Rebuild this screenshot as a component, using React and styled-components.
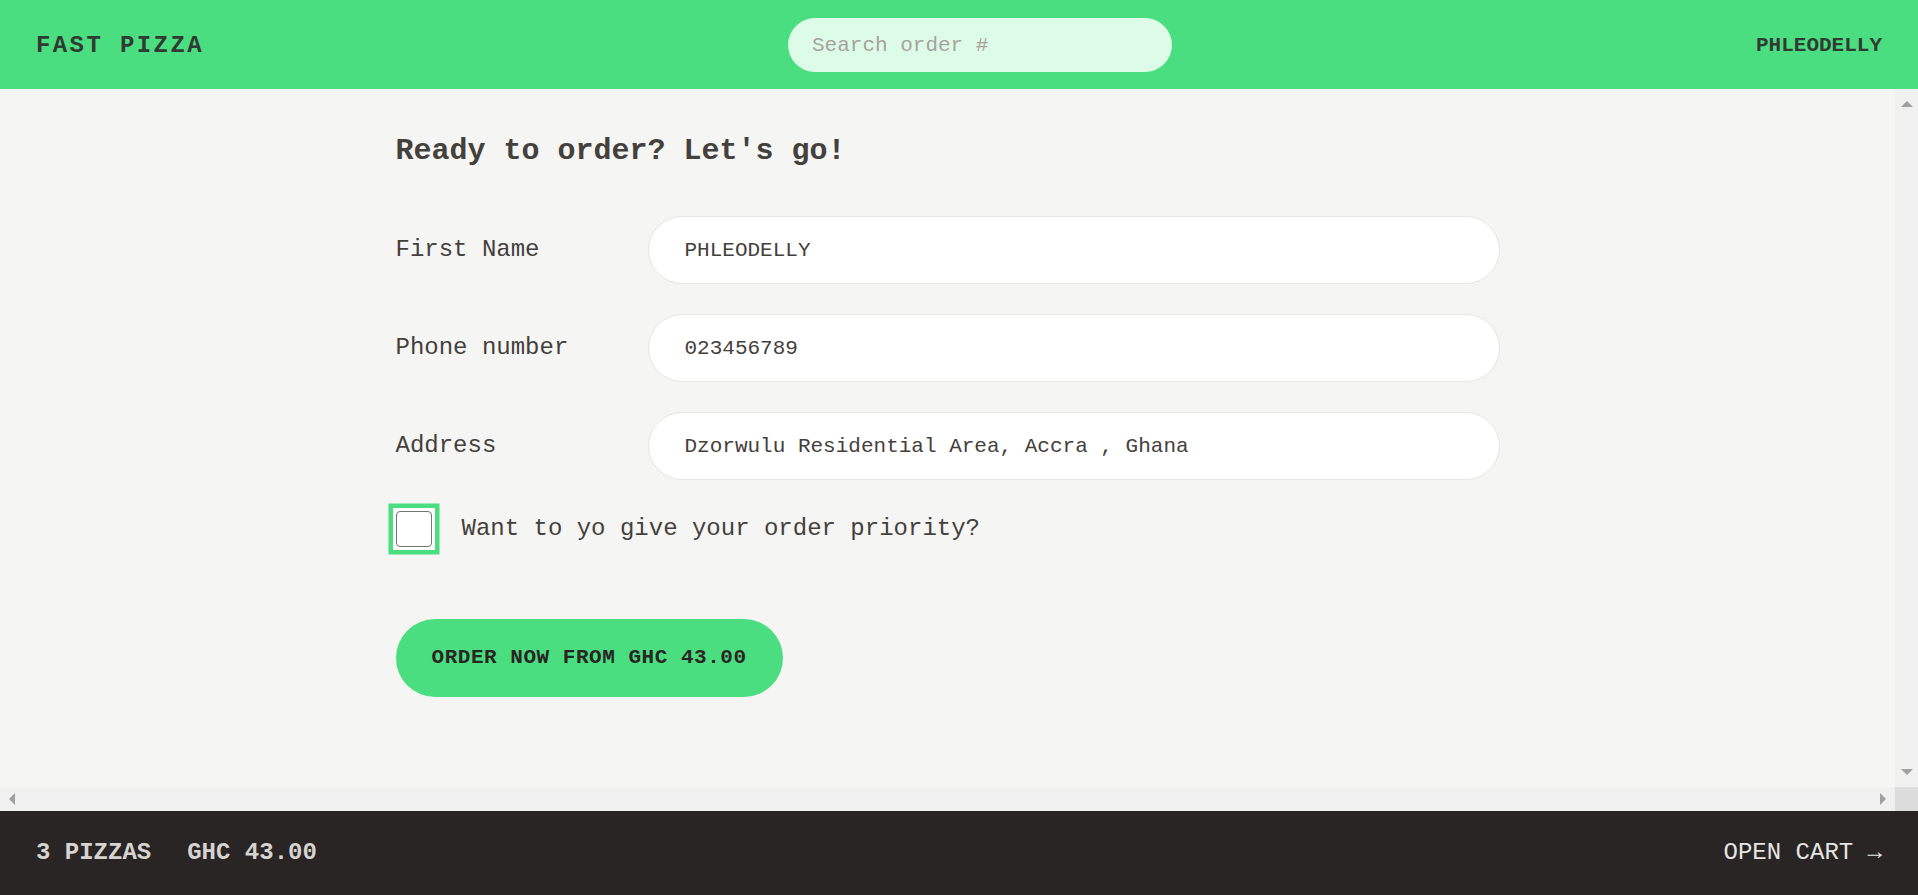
import React, { useState } from "react";
import styled, { createGlobalStyle, css } from "styled-components";

const GlobalStyle = createGlobalStyle`
  html, body {
    margin: 0;
    padding: 0;
  }
  body {
    font-family: "Liberation Mono", "DejaVu Sans Mono", monospace;
    color: #44403c;
    background-color: #f5f5f4;
  }
  * {
    box-sizing: border-box;
  }
`;

const AppLayout = styled.div`
  display: grid;
  grid-template-rows: auto 1fr auto;
  height: 100vh;
`;

const Header = styled.header`
  display: flex;
  align-items: center;
  justify-content: space-between;
  padding: 18px 36px 17px;
  background-color: #4ade80;
  text-transform: uppercase;
`;

const Logo = styled.a`
  font-size: 24px;
  font-weight: 600;
  letter-spacing: 2.4px;
  color: #2f3b33;
  text-decoration: none;
`;

const SearchInput = styled.input`
  width: 384px;
  height: 54px;
  padding: 12px 24px;
  border: none;
  border-radius: 9999px;
  background-color: #dcfce7;
  font-family: inherit;
  font-size: 21px;
  color: #44403c;
  outline: none;
  &::placeholder {
    color: #a8a29e;
  }
`;

const Username = styled.div`
  font-size: 21px;
  font-weight: 600;
  color: #2f3b33;
`;

const Main = styled.main`
  display: grid;
  grid-template-columns: 1fr 23px;
  grid-template-rows: 1fr 24px;
  min-height: 0;
  overflow: hidden;
  background-color: #f5f5f4;
`;

const Viewport = styled.div`
  min-height: 0;
  overflow: hidden;
`;

const ScrollTrack = styled.div`
  display: flex;
  flex-direction: ${(p) => (p.$vertical ? "column" : "row")};
  justify-content: space-between;
  background-color: #f0f0f0;
`;

const ScrollButton = styled.div`
  display: flex;
  align-items: center;
  justify-content: center;
  width: ${(p) => (p.$vertical ? "23px" : "24px")};
  height: ${(p) => (p.$vertical ? "30px" : "24px")};
`;

const Arrow = styled.span`
  width: 0;
  height: 0;
  ${(p) =>
    p.$dir === "up" &&
    css`
      border-left: 6px solid transparent;
      border-right: 6px solid transparent;
      border-bottom: 6px solid #a0a0a0;
    `}
  ${(p) =>
    p.$dir === "down" &&
    css`
      border-left: 6px solid transparent;
      border-right: 6px solid transparent;
      border-top: 6px solid #a0a0a0;
    `}
  ${(p) =>
    p.$dir === "left" &&
    css`
      border-top: 6px solid transparent;
      border-bottom: 6px solid transparent;
      border-right: 6px solid #a0a0a0;
    `}
  ${(p) =>
    p.$dir === "right" &&
    css`
      border-top: 6px solid transparent;
      border-bottom: 6px solid transparent;
      border-left: 6px solid #a0a0a0;
    `}
`;

const ScrollCorner = styled.div`
  background-color: #dcdcdc;
`;

const Container = styled.div`
  max-width: 1152px;
  margin: 0 auto;
  padding: 36px 24px;
`;

const Heading = styled.h2`
  margin: 0 0 44px;
  padding-top: 5px;
  font-size: 30px;
  line-height: 42px;
  font-weight: 600;
  color: #44403c;
`;

const FieldRow = styled.div`
  display: flex;
  align-items: center;
  gap: 12px;
  margin-bottom: 30px;
`;

const Label = styled.label`
  flex: 0 0 240px;
  font-size: 24px;
  line-height: 36px;
  color: #44403c;
`;

const TextInput = styled.input`
  flex-grow: 1;
  height: 68px;
  padding: 18px 36px;
  border: 1px solid #e7e5e4;
  border-radius: 9999px;
  background-color: #fff;
  font-family: inherit;
  font-size: 21px;
  line-height: 30px;
  color: #44403c;
  outline: none;
`;

const CheckRow = styled.div`
  display: flex;
  align-items: center;
  gap: 30px;
  margin-bottom: 72px;
  padding-top: 1px;
`;

const CheckFrame = styled.span`
  display: inline-flex;
  width: 36px;
  height: 36px;
  background-color: #fff;
  box-shadow: 0 0 0 3px #fff, 0 0 0 7.5px #4ade80;
`;

const Checkbox = styled.input`
  appearance: none;
  width: 100%;
  height: 100%;
  margin: 0;
  border: 1.5px solid #767676;
  border-radius: 4px;
  background-color: #fff;
  outline: none;
`;

const CheckLabel = styled.label`
  font-size: 24px;
  line-height: 36px;
  font-weight: 500;
  color: #44403c;
`;

const OrderButton = styled.button`
  display: inline-block;
  padding: 24px 36px;
  border: none;
  border-radius: 9999px;
  background-color: #4ade80;
  font-family: inherit;
  font-size: 21px;
  line-height: 30px;
  font-weight: 600;
  letter-spacing: 0.525px;
  text-transform: uppercase;
  color: #292524;
  cursor: pointer;
`;

const Footer = styled.footer`
  display: flex;
  align-items: center;
  justify-content: space-between;
  padding: 24px 36px;
  background-color: #292524;
  color: #e7e5e4;
  font-size: 24px;
  line-height: 36px;
  text-transform: uppercase;
`;

const Summary = styled.p`
  display: flex;
  gap: 36px;
  margin: 0;
  font-weight: 600;
  color: #d6d3d1;
`;

const CartLink = styled.a`
  color: #e7e5e4;
  text-decoration: none;
`;

const fields = [
  { id: "customer", label: "First Name", value: "PHLEODELLY" },
  { id: "phone", label: "Phone number", value: "023456789" },
  { id: "address", label: "Address", value: "Dzorwulu Residential Area, Accra , Ghana" },
];

const App = () => {
  const [values, setValues] = useState(
    Object.fromEntries(fields.map((f) => [f.id, f.value]))
  );
  const [priority, setPriority] = useState(false);

  return (
    <>
      <GlobalStyle />
      <AppLayout>
        <Header>
          <Logo href="#">Fast Pizza</Logo>
          <SearchInput placeholder="Search order #" />
          <Username>phleodelly</Username>
        </Header>

        <Main>
          <Viewport>
            <Container>
              <Heading>Ready to order? Let's go!</Heading>

              <form onSubmit={(e) => e.preventDefault()}>
                {fields.map((f) => (
                  <FieldRow key={f.id}>
                    <Label htmlFor={f.id}>{f.label}</Label>
                    <TextInput
                      id={f.id}
                      type="text"
                      value={values[f.id]}
                      onChange={(e) =>
                        setValues({ ...values, [f.id]: e.target.value })
                      }
                    />
                  </FieldRow>
                ))}

                <CheckRow>
                  <CheckFrame>
                    <Checkbox
                      type="checkbox"
                      id="priority"
                      checked={priority}
                      onChange={(e) => setPriority(e.target.checked)}
                    />
                  </CheckFrame>
                  <CheckLabel htmlFor="priority">
                    Want to yo give your order priority?
                  </CheckLabel>
                </CheckRow>

                <div>
                  <OrderButton>Order now from GHC 43.00</OrderButton>
                </div>
              </form>
            </Container>
          </Viewport>

          <ScrollTrack $vertical>
            <ScrollButton $vertical>
              <Arrow $dir="up" />
            </ScrollButton>
            <ScrollButton $vertical>
              <Arrow $dir="down" />
            </ScrollButton>
          </ScrollTrack>

          <ScrollTrack>
            <ScrollButton>
              <Arrow $dir="left" />
            </ScrollButton>
            <ScrollButton>
              <Arrow $dir="right" />
            </ScrollButton>
          </ScrollTrack>

          <ScrollCorner />
        </Main>

        <Footer>
          <Summary>
            <span>3 pizzas</span>
            <span>GHC 43.00</span>
          </Summary>
          <CartLink href="#">Open cart &rarr;</CartLink>
        </Footer>
      </AppLayout>
    </>
  );
};

export default App;
